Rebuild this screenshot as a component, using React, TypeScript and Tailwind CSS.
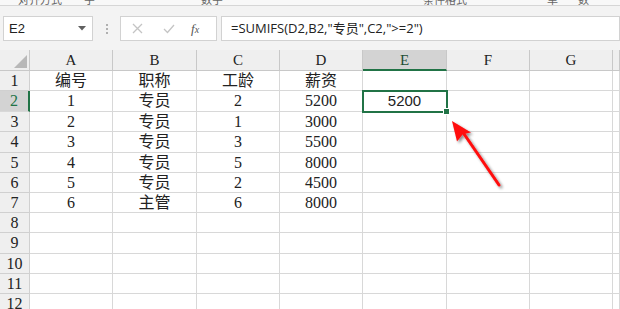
import React from "react";

const serif = { fontFamily: '"Liberation Serif", "Noto Sans CJK SC", serif' };

const cols = ["A", "B", "C", "D", "E", "F", "G", ""];
const data: string[][] = [
  ["编号", "职称", "工龄", "薪资"],
  ["1", "专员", "2", "5200"],
  ["2", "专员", "1", "3000"],
  ["3", "专员", "3", "5500"],
  ["4", "专员", "5", "8000"],
  ["5", "专员", "2", "4500"],
  ["6", "主管", "6", "8000"],
];
const rowCount = 12;

export default function App() {
  return (
    <div className="relative w-[620px] h-[309px] overflow-hidden bg-white">
      {/* ribbon remnant */}
      <div className="h-[6px] overflow-hidden bg-[#f8f8f8] border-b border-[#d6d6d6] flex text-[11px] leading-[11px] text-[#666]" style={{ fontFamily: '"Noto Sans CJK SC", sans-serif' }}>
        <span className="-mt-[6px] ml-[18px]">对齐方式</span>
        <span className="-mt-[6px] ml-[22px]">字</span>
        <span className="-mt-[6px] ml-[106px]">数字</span>
        <span className="-mt-[6px] ml-[200px]">条件格式</span>
        <span className="-mt-[6px] ml-[80px]">单</span>
        <span className="-mt-[6px] ml-[20px]">数</span>
      </div>
      {/* formula bar */}
      <div className="h-[44px] bg-[#f3f3f3] flex items-start pt-[10px] pl-[3px]">
        <div className="w-[90px] h-[25px] bg-white border border-[#d2d2d2] flex items-center justify-between pl-[5px] pr-[6px]">
          <span className="text-[13px] text-[#222]" style={{ fontFamily: '"Liberation Sans", sans-serif' }}>E2</span>
          <svg width="8" height="5" viewBox="0 0 8 5"><path d="M0 0 L8 0 L4 4.5 Z" fill="#606060" /></svg>
        </div>
        <div className="w-[27px] h-[25px] flex flex-col items-center justify-center gap-[2px]">
          <span className="w-[2px] h-[2px] bg-[#b0b0b0]" />
          <span className="w-[2px] h-[2px] bg-[#b0b0b0]" />
          <span className="w-[2px] h-[2px] bg-[#b0b0b0]" />
        </div>
        <div className="w-[97px] h-[25px] bg-white border border-[#d2d2d2] flex items-center">
          <svg className="ml-[11px]" width="11" height="11" viewBox="0 0 11 11"><path d="M1 1 L10 10 M10 1 L1 10" stroke="#c4c4c4" strokeWidth="1.3" /></svg>
          <svg className="ml-[20px]" width="12" height="10" viewBox="0 0 12 10"><path d="M1 5 L4.5 8.5 L11 1" stroke="#c4c4c4" strokeWidth="1.3" fill="none" /></svg>
          <span className="ml-[16px] text-[13px] italic text-[#555]" style={{ fontFamily: '"Liberation Serif", serif' }}>f<span className="text-[10px]">x</span></span>
        </div>
        <div className="ml-[4px] flex-1 h-[25px] bg-white border border-[#d2d2d2] flex items-center pl-[9px] text-[13px] text-[#222]" style={{ fontFamily: '"Open Sans", "Noto Sans CJK SC", sans-serif' }}>
          =SUMIFS(D2,B2,"专员",C2,"&gt;=2")
        </div>
      </div>
      {/* grid */}
      <div className="relative">
        <div className="grid grid-cols-[30px_83px_84px_83px_83px_84px_83px_83px_1fr] grid-rows-[21px_20px_21px_20px_21px_20px_20px_20px_20px_21px_20px_20px_21px]">
          {/* header row */}
          <div className="bg-[#efefef] border-r border-b border-[#c8c8c8] flex items-end justify-end pr-[2px] pb-[2px]">
            <svg width="13" height="13" viewBox="0 0 13 13"><path d="M13 0 L13 13 L0 13 Z" fill="#b8b8b8" /></svg>
          </div>
          {cols.map((c, i) =>
            c === "E" ? (
              <div key={i} className="bg-[#d3d3d3] border-r border-[#c8c8c8] border-b-2 border-b-[#217346] flex items-center justify-center text-[15px] text-[#1d4d33] pt-[1px]" style={serif}>
                {c}
              </div>
            ) : (
              <div key={i} className="bg-[#efefef] border-r border-b border-[#c8c8c8] flex items-center justify-center text-[15px] text-[#222] pt-[1px]" style={serif}>
                {c}
              </div>
            )
          )}
          {Array.from({ length: rowCount }).map((_, r) => (
            <React.Fragment key={r}>
              {r === 1 ? (
                <div className="bg-[#d3d3d3] border-b border-[#d8d8d8] border-r-2 border-r-[#217346] flex items-center justify-center text-[16px] text-[#217346]" style={serif}>
                  {r + 1}
                </div>
              ) : (
                <div className="bg-[#efefef] border-r border-b border-[#d0d0d0] flex items-center justify-center text-[16px] text-[#222]" style={serif}>
                  {r + 1}
                </div>
              )}
              {cols.map((_, c) => {
                const v = data[r]?.[c] ?? (r === 1 && c === 4 ? "5200" : "");
                const isE2 = r === 1 && c === 4;
                return (
                  <div
                    key={c}
                    className={
                      isE2
                        ? "border-r border-b border-[#d8d8d8] flex items-center justify-center text-[15px] text-[#222]"
                        : "border-r border-b border-[#d8d8d8] flex items-center justify-center text-[16px] text-[#222]"
                    }
                    style={isE2 ? { fontFamily: '"Liberation Sans", sans-serif' } : serif}
                  >
                    {v}
                  </div>
                );
              })}
            </React.Fragment>
          ))}
        </div>
        {/* selection */}
        <div className="absolute left-[362px] top-[40px] w-[86px] h-[23px] border-2 border-[#217346]" />
        <div className="absolute left-[443px] top-[58px] w-[7px] h-[7px] bg-[#217346] border border-white" />
      </div>
      {/* arrow */}
      <svg className="absolute left-0 top-0 pointer-events-none" width="620" height="309" viewBox="0 0 620 309">
        <defs>
          <filter id="sh" x="-50%" y="-50%" width="200%" height="200%">
            <feGaussianBlur in="SourceAlpha" stdDeviation="1.5" />
            <feOffset dx="1.5" dy="2" result="b" />
            <feComponentTransfer><feFuncA type="linear" slope="0.45" /></feComponentTransfer>
            <feMerge><feMergeNode /><feMergeNode in="SourceGraphic" /></feMerge>
          </filter>
        </defs>
        <g filter="url(#sh)">
          <line x1="499" y1="185" x2="462" y2="131" stroke="#ff0a0a" strokeWidth="3" strokeLinecap="round" />
          <path d="M452 121 L471 132.5 L463 134 L457 141.5 Z" fill="#ff0a0a" />
        </g>
      </svg>
    </div>
  );
}
